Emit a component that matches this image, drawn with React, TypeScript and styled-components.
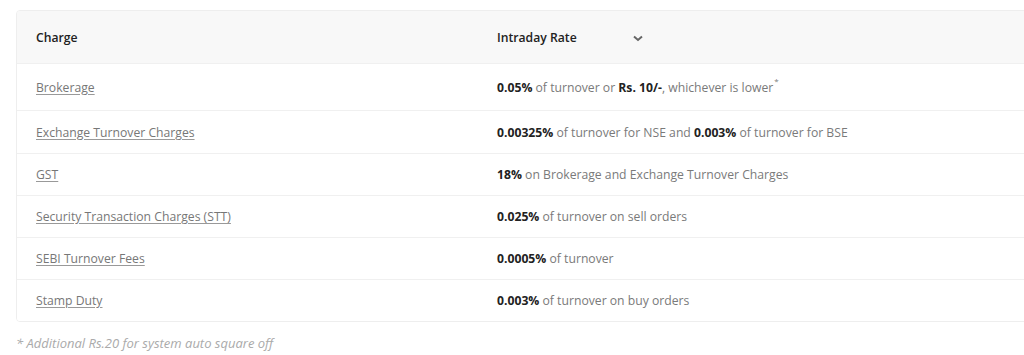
import React from "react";
import styled, { createGlobalStyle } from "styled-components";

const Global = createGlobalStyle`
  html, body { margin: 0; padding: 0; background: #fff; overflow: hidden; }
  body { font-family: "Open Sans", "Noto Sans", sans-serif; }
`;

const Page = styled.div`
  padding: 10px 0 0 16px;
  width: 1140px;
`;

const Table = styled.div`
  border: 1px solid #eeeeee;
  border-radius: 4px;
  overflow: hidden;
  background: #fff;
`;

const Row = styled.div<{ $head?: boolean; $h: number }>`
  display: grid;
  grid-template-columns: 461px 1fr;
  height: ${(p) => p.$h}px;
  align-items: center;
  background: ${(p) => (p.$head ? "#f8f8f8" : "#fff")};
  border-bottom: 1px solid #f0f0f0;
  &:last-child { border-bottom: none; }
`;

const Cell = styled.div`
  padding-left: 19px;
  font-size: 12.2px;
  color: #7a7a7a;
  display: flex;
  align-items: center;
`;

const HeadCell = styled(Cell)`
  font-weight: 600;
  color: #222;
`;

const LinkText = styled.a`
  color: #777;
  text-decoration: underline;
  text-underline-offset: 2px;
  text-decoration-color: #999;
  cursor: pointer;
`;

const B = styled.b`
  font-weight: 700;
  color: #222;
`;

const Sup = styled.sup`
  font-size: 8px;
  margin-left: 1px;
  position: relative;
  top: -3px;
`;

const Chevron = styled.span`
  margin-left: 56px;
  display: inline-flex;
  margin-top: 2px;
`;

const Note = styled.div`
  margin-top: 12px;
  font-size: 13px;
  font-style: italic;
  color: #aaa;
`;

const rows: { name: string; h: number; rate: React.ReactNode }[] = [
  {
    name: "Brokerage",
    h: 46,
    rate: (
      <span>
        <B>0.05%</B> of turnover or <B>Rs. 10/-</B>, whichever is lower<Sup>*</Sup>
      </span>
    ),
  },
  {
    name: "Exchange Turnover Charges",
    h: 42,
    rate: (
      <span>
        <B>0.00325%</B> of turnover for NSE and <B>0.003%</B> of turnover for BSE
      </span>
    ),
  },
  {
    name: "GST",
    h: 41,
    rate: (
      <span>
        <B>18%</B> on Brokerage and Exchange Turnover Charges
      </span>
    ),
  },
  {
    name: "Security Transaction Charges (STT)",
    h: 41,
    rate: (
      <span>
        <B>0.025%</B> of turnover on sell orders
      </span>
    ),
  },
  {
    name: "SEBI Turnover Fees",
    h: 41,
    rate: (
      <span>
        <B>0.0005%</B> of turnover
      </span>
    ),
  },
  {
    name: "Stamp Duty",
    h: 41,
    rate: (
      <span>
        <B>0.003%</B> of turnover on buy orders
      </span>
    ),
  },
];

export default function App() {
  return (
    <>
      <Global />
      <Page>
        <Table>
          <Row $head $h={52}>
            <HeadCell>Charge</HeadCell>
            <HeadCell>
              Intraday Rate
              <Chevron>
                <svg width="10" height="7" viewBox="0 0 10 7">
                  <path d="M1 1.5 L5 5 L9 1.5" fill="none" stroke="#666" strokeWidth="2" />
                </svg>
              </Chevron>
            </HeadCell>
          </Row>
          {rows.map((r) => (
            <Row key={r.name} $h={r.h}>
              <Cell>
                <LinkText>{r.name}</LinkText>
              </Cell>
              <Cell>{r.rate}</Cell>
            </Row>
          ))}
        </Table>
        <Note>* Additional Rs.20 for system auto square off</Note>
      </Page>
    </>
  );
}
